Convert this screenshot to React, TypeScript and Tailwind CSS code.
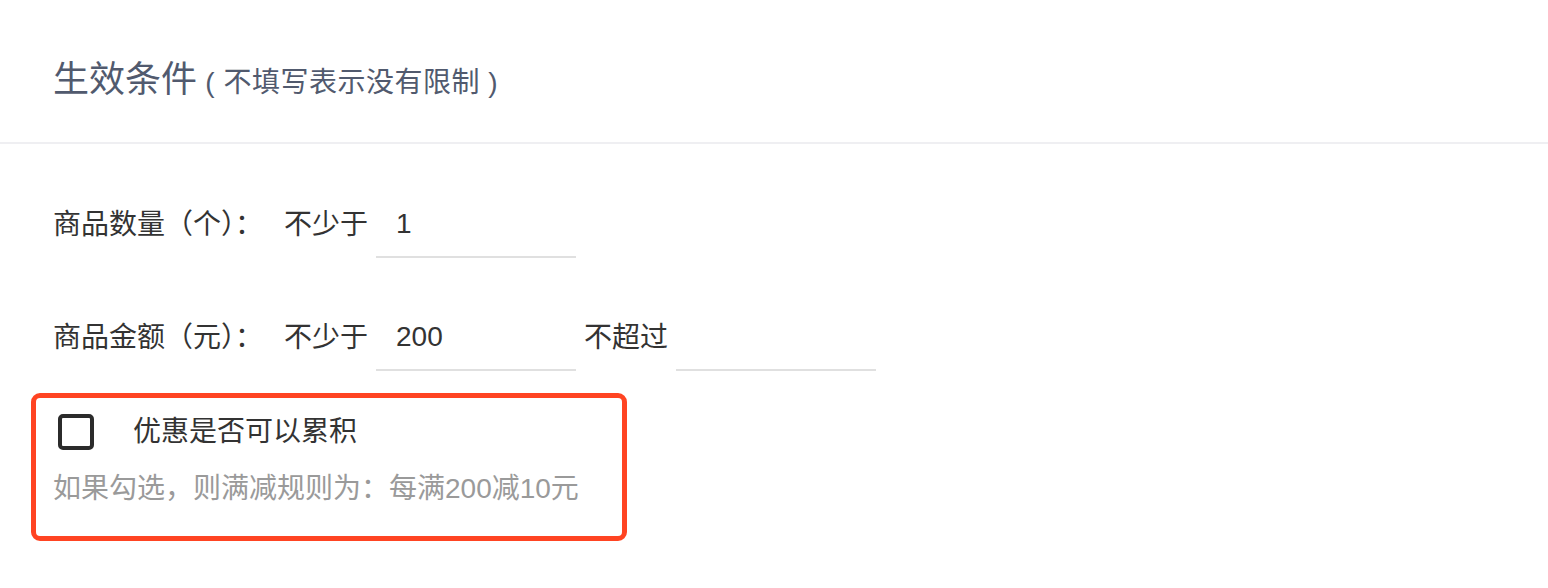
import { useState } from "react";

const font = "font-['Liberation_Sans','Noto_Sans_CJK_SC',sans-serif]";

function Field(props: { value?: string }) {
  return (
    <input
      defaultValue={props.value ?? ""}
      className="h-[66px] w-[200px] border-b-2 border-[#e0e0e0] bg-transparent pl-[20px] text-[28px] text-[#333] outline-none"
    />
  );
}

export default function App() {
  const [stack, setStack] = useState(false);

  return (
    <div className={`min-h-[588px] w-full bg-white ${font}`}>
      {/* Header */}
      <div className="flex h-[144px] items-center border-b-2 border-[#efeff2] px-[53px] pt-[18px]">
        <div className="flex items-baseline text-[#515a6e]">
          <span className="text-[36px] leading-none">生效条件</span>
          <span className="text-[28px] leading-none tracking-[0.5px]">&nbsp;( 不填写表示没有限制 )</span>
        </div>
      </div>

      {/* Body */}
      <div className="pt-[48px]">
        <div className="flex flex-col gap-[47px] px-[53px] text-[28px] text-[#333]">
          <div className="flex h-[66px] items-center gap-2">
            <span className="mr-[13px]">商品数量（个）：</span>
            <span>不少于</span>
            <Field value="1" />
          </div>
          <div className="flex h-[66px] items-center gap-2">
            <span className="mr-[13px]">商品金额（元）：</span>
            <span>不少于</span>
            <Field value="200" />
            <span>不超过</span>
            <Field />
          </div>
        </div>

        <div className="ml-[31px] mt-[22px] h-[148px] w-[596px] rounded-[9px] border-[5px] border-[#ff4422] pl-[17px] pt-[16px]">
          <label className="flex h-[36px] cursor-pointer items-center">
            <input
              type="checkbox"
              checked={stack}
              onChange={(e) => setStack(e.target.checked)}
              className="peer sr-only"
            />
            <span className="ml-[5px] flex h-[36px] w-[36px] items-center justify-center rounded-[5px] border-[4px] border-[#2b2b2b] text-[22px] leading-none text-[#2b2b2b]">
              {stack ? "✓" : ""}
            </span>
            <span className="ml-[39px] text-[28px] text-[#333]">优惠是否可以累积</span>
          </label>
          <div className="mt-[21px] text-[28px] leading-[36px] text-[#9a9a9a]">
            如果勾选，则满减规则为：每满200减10元
          </div>
        </div>
      </div>
    </div>
  );
}
